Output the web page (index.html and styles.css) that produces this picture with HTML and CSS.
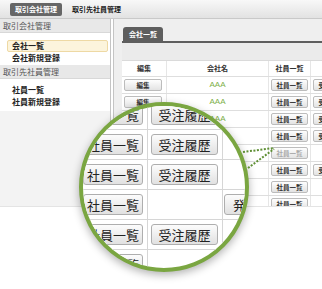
FILE: index.html
```html
<!DOCTYPE html>
<html>
<head>
<meta charset="utf-8">
<title>取引会社管理</title>
<link rel="stylesheet" href="styles.css">
</head>
<body>

<div class="screen">
	<div class="topbar">
		<span class="toptab active">取引会社管理</span>
		<span class="toptab">取引先社員管理</span>
	</div>

	<div class="workspace">
		<div class="side">
			<div class="side-head">取引会社管理</div>
			<ul class="side-list first">
				<li class="current">会社一覧</li>
				<li>会社新規登録</li>
			</ul>
			<div class="side-head">取引先社員管理</div>
			<ul class="side-list second">
				<li>社員一覧</li>
				<li>社員新規登録</li>
			</ul>
		</div>

		<div class="main">
			<div class="tabs"><span class="tab">会社一覧</span></div>
			<div class="band"></div>

			<div class="grid">
				<div class="row head">
					<div class="cell">編集</div>
					<div class="cell">会社名</div>
					<div class="cell">社員一覧</div>
					<div class="cell">受注履歴</div>
				</div>
				<div class="row">
					<div class="cell"><span class="btn edit">編集</span></div>
					<div class="cell name">AAA</div>
					<div class="cell"><span class="btn">社員一覧</span></div>
					<div class="cell"><span class="btn">受注履歴</span></div>
				</div>
				<div class="row">
					<div class="cell"><span class="btn edit">編集</span></div>
					<div class="cell name">AAA</div>
					<div class="cell"><span class="btn">社員一覧</span></div>
					<div class="cell"><span class="btn">受注履歴</span></div>
				</div>
				<div class="row">
					<div class="cell"><span class="btn edit">編集</span></div>
					<div class="cell name">AAA</div>
					<div class="cell"><span class="btn">社員一覧</span></div>
					<div class="cell"><span class="btn">受注履歴</span></div>
				</div>
				<div class="row">
					<div class="cell"><span class="btn edit">編集</span></div>
					<div class="cell name">AAA</div>
					<div class="cell"><span class="btn">社員一覧</span></div>
					<div class="cell"><span class="btn">受注履歴</span></div>
				</div>
				<div class="row">
					<div class="cell"><span class="btn edit">編集</span></div>
					<div class="cell name">AAA</div>
					<div class="cell"><span class="btn dim">社員一覧</span></div>
					<div class="cell"></div>
				</div>
				<div class="row">
					<div class="cell"><span class="btn edit">編集</span></div>
					<div class="cell name">AAA</div>
					<div class="cell"><span class="btn">社員一覧</span></div>
					<div class="cell"><span class="btn">受注履歴</span></div>
				</div>
				<div class="row">
					<div class="cell"><span class="btn edit">編集</span></div>
					<div class="cell name">AAA</div>
					<div class="cell"><span class="btn">社員一覧</span></div>
					<div class="cell"></div>
				</div>
				<div class="row">
					<div class="cell"><span class="btn edit">編集</span></div>
					<div class="cell name">AAA</div>
					<div class="cell"><span class="btn">社員一覧</span></div>
					<div class="cell"></div>
				</div>
			</div>
		</div>
	</div>
</div>

<!-- magnifier over the list -->
<div class="lens">
	<div class="zoomed">
		<div class="zrow">
			<div class="zcell"><span class="zbtn a">社員一覧</span></div>
			<div class="zcell"><span class="zbtn b">受注履歴</span></div>
			<div class="zcell c"></div>
		</div>
		<div class="zrow">
			<div class="zcell"><span class="zbtn a">社員一覧</span></div>
			<div class="zcell"><span class="zbtn b">受注履歴</span></div>
			<div class="zcell c"></div>
		</div>
		<div class="zrow">
			<div class="zcell"><span class="zbtn a">社員一覧</span></div>
			<div class="zcell"><span class="zbtn b">受注履歴</span></div>
			<div class="zcell c"></div>
		</div>
		<div class="zrow">
			<div class="zcell"><span class="zbtn a">社員一覧</span></div>
			<div class="zcell"></div>
			<div class="zcell c"><span class="zbtn c">発注履歴</span></div>
		</div>
		<div class="zrow">
			<div class="zcell"><span class="zbtn a">社員一覧</span></div>
			<div class="zcell"><span class="zbtn b">受注履歴</span></div>
			<div class="zcell c"></div>
		</div>
		<div class="zrow">
			<div class="zcell"><span class="zbtn a">社員一覧</span></div>
			<div class="zcell"></div>
			<div class="zcell c"></div>
		</div>
	</div>
</div>

<svg class="pointer" width="322" height="289" viewBox="0 0 322 289">
	<path d="M243 152 L274 148 M248 168 L274 149" fill="none" stroke="#5f8f35" stroke-width="2" stroke-dasharray="2 1.5"/>
</svg>

</body>
</html>
```

FILE: styles.css
```css
* { box-sizing: border-box; }
body { margin: 0; width: 322px; height: 289px; overflow: hidden; position: relative; background: #fff; color: #222; font-family: "Noto Sans CJK JP", "Noto Sans", sans-serif; }

.screen { width: 322px; height: 207px; overflow: hidden; display: flex; flex-direction: column; border-bottom: 1px solid #e4e4e4; }

/* top menu */
.topbar { height: 19px; flex: none; display: flex; align-items: flex-start; padding: 3px 0 0 10px; background: linear-gradient(#f8f8f8, #e2e2e2); border-bottom: 1px solid #c9c9c9; }
.toptab { height: 13px; line-height: 13px; padding: 0 5px; font-size: 7px; font-weight: bold; color: #222; }
.toptab.active { background: #666; color: #fff; border-radius: 2px; margin-right: 5px; }

.workspace { flex: 1; display: flex; min-height: 0; }

/* left menu */
.side { width: 111px; flex: none; background: #f3f3f3; border-right: 1px solid #c4c4c4; }
.side-head { height: 14px; line-height: 13px; padding-left: 3px; font-size: 8px; color: #555; background: #e8e8e8; border-bottom: 1px solid #d8d8d8; }
.side-list { list-style: none; margin: 0; background: #fff; }
.side-list.first { padding: 7px 2px 1px 7px; }
.side-list.second { padding: 5px 2px 3px 7px; }
.side-list li { height: 12px; line-height: 10px; padding-left: 4px; border: 1px solid transparent; font-size: 8px; font-weight: bold; color: #222; }
.side-list li.current { background: #fcf4dc; border-color: #eed9a4; border-radius: 2px; }

/* list panel */
.main { flex: 1; min-width: 0; margin-left: 2px; padding-left: 8px; border-left: 1px solid #c4c4c4; background: #efefef; overflow: hidden; }
.tabs { height: 24px; padding: 8px 0 0 1px; border-bottom: 2px solid #5e5e5e; }
.tab { display: inline-block; vertical-align: top; height: 14px; line-height: 14px; padding: 0 6px; background: #5e5e5e; color: #fff; font-size: 7px; font-weight: bold; border-radius: 3px 3px 0 0; }
.band { height: 18px; background: #ebebeb; border-bottom: 1px solid #dadada; }

.grid { width: 250px; background: #fff; }
.row { display: grid; grid-template-columns: 44px 102px 42px 62px; height: 17px; border-bottom: 1px solid #dedede; }
.row.head { height: 16px; }
.row.head .cell { padding: 0; line-height: 15px; text-align: center; font-size: 7px; font-weight: bold; color: #333; }
.cell { padding: 2px 0 0 2px; border-left: 1px solid #e6e6e6; }
.cell:first-child { border-left: none; }
.cell.name { padding: 0; line-height: 16px; text-align: center; font-family: "Liberation Sans", Arial, sans-serif; font-size: 8px; color: #7db04a; }

.btn { display: block; width: 37px; height: 12px; line-height: 10px; border: 1px solid #bcbcbc; border-radius: 2px; background: linear-gradient(#fefefe, #e3e3e3); font-size: 6.5px; font-weight: bold; color: #333; text-align: center; white-space: nowrap; overflow: hidden; }
.btn.edit { width: 38px; }
.btn.dim { color: #aaa; }

/* magnifier */
.lens { position: absolute; left: 79px; top: 102px; width: 170px; height: 170px; border: 4px solid #7aa641; border-radius: 50%; overflow: hidden; background: #fff; box-shadow: 0 3px 8px rgba(0, 0, 0, 0.3); }
.zoomed { width: 260px; margin: -6px 0 0 -3px; }
.zrow { display: grid; grid-template-columns: 67px 75px 80px; height: 30px; border-bottom: 1px solid #d6d6d6; }
.zcell { padding: 4px 0 0 3px; border-left: 1px solid #d6d6d6; }
.zcell:first-child { border-left: none; }
.zcell.c { padding-left: 1px; }
.zbtn { display: block; height: 21px; line-height: 19px; border: 1px solid #aeaeae; border-radius: 3px; background: linear-gradient(#fcfcfc, #e1e1e1); font-size: 13px; color: #222; text-align: center; white-space: nowrap; }
.zbtn.a { width: 60px; }
.zbtn.b { width: 67px; }
.zbtn.c { width: 70px; }

.pointer { position: absolute; left: 0; top: 0; pointer-events: none; }
```
